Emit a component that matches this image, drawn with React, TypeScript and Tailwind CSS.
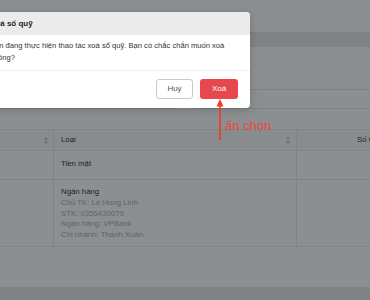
import React from "react";

function SortIcon() {
    return (
        <svg width="4" height="7" viewBox="0 0 4 7" className="shrink-0">
            <path d="M2 0 L4 2.6 L0 2.6 Z" fill="#bfbfbf" />
            <path d="M2 7 L4 4.4 L0 4.4 Z" fill="#bfbfbf" />
        </svg>
    );
}

function ConfirmModal() {
    return (
        <div className="absolute left-[-26px] top-[12px] w-[276px] rounded-[4px] bg-white shadow-[0_2px_8px_rgba(0,0,0,0.18)]">
            <div className="h-[23px] rounded-t-[4px] bg-[#ebebeb] pl-[16px] flex items-center">
                <span className="text-[8px] font-semibold text-[#1f1f1f]">Xoá sổ quỹ</span>
            </div>
            <div className="border-b border-[#efefef] pl-[16px] pr-[3px] pt-[5px] pb-[6px] text-[7.6px] leading-[12px] text-[#333]">
                Bạn đang thực hiện thao tác xoá sổ quỹ. Bạn có chắc chắn muốn xoá không?
            </div>
            <div className="flex justify-end gap-[7px] pt-[8px] pb-[9px] pr-[12px]">
                <button className="h-[20px] w-[37px] rounded-[3px] border border-[#c9c9c9] bg-white text-[8px] text-[#555]">
                    Huỷ
                </button>
                <button className="h-[20px] w-[38px] rounded-[3px] bg-[#e6484e] text-[8px] text-white">
                    Xoá
                </button>
            </div>
        </div>
    );
}

export default function App() {
    return (
        <div className="relative h-[300px] w-[370px] overflow-hidden bg-white font-['Liberation_Sans',Arial,sans-serif]">
            {/* page behind the dialog */}
            <div className="h-[32px]" />
            <div className="h-[15px] bg-[#e7e9ea]" />
            <div className="h-[42px]" />
            <div className="flex h-[20px] gap-[16px]">
                <div className="-ml-[4px] w-[181px] shrink-0 rounded-[2px] border border-[#e6e6e6]" />
                <div className="flex-1 -mr-[6px] rounded-[2px] border border-[#e6e6e6]" />
            </div>
            <div className="h-[20px]" />

            <div className="text-[7.8px] text-[#3a3a3a]">
                <div className="flex h-[22px] border-y border-[#ebebeb] bg-[#fafafa]">
                    <div className="flex w-[53px] shrink-0 items-center justify-end pr-[5px]">
                        <SortIcon />
                    </div>
                    <div className="flex w-[243px] shrink-0 items-center justify-between border-l border-[#ebebeb] pl-[7px] pr-[6px]">
                        <span className="font-medium">Loại</span>
                        <SortIcon />
                    </div>
                    <div className="flex flex-1 items-center border-l border-[#ebebeb] pl-[60px] whitespace-nowrap">
                        Số tiền
                    </div>
                </div>
                <div className="flex h-[29px] border-b border-[#ebebeb]">
                    <div className="w-[53px] shrink-0" />
                    <div className="w-[243px] shrink-0 border-l border-[#ebebeb] pl-[7px] pt-[7px] leading-[11px]">Tiền mặt</div>
                    <div className="flex-1 border-l border-[#ebebeb]" />
                </div>
                <div className="flex h-[67px] border-b border-[#ebebeb]">
                    <div className="w-[53px] shrink-0" />
                    <div className="w-[243px] shrink-0 border-l border-[#ebebeb] pl-[7px] pt-[7px] leading-[10.75px]">
                        <div>Ngân hàng</div>
                        <div className="text-[#b0b0b0]">Chủ TK: Le Hong Linh</div>
                        <div className="text-[#b0b0b0]">STK: 0355430079</div>
                        <div className="text-[#b0b0b0]">Ngân hàng: VPBank</div>
                        <div className="text-[#b0b0b0]">Chi nhánh: Thanh Xuân</div>
                    </div>
                    <div className="flex-1 border-l border-[#ebebeb]" />
                </div>
            </div>
            <div className="h-[40px]" />
            <div className="h-[13px] bg-[#e7e9ea]" />

            {/* mask */}
            <div className="absolute inset-0 bg-[rgba(0,6,10,0.45)]" />

            <ConfirmModal />

            {/* annotation */}
            <svg className="absolute left-[212px] top-[96px]" width="16" height="48" viewBox="0 0 16 48">
                <path d="M8 3 L11.5 10.5 L4.5 10.5 Z" fill="#f4361f" />
                <line x1="8" y1="10" x2="8" y2="44" stroke="#f4361f" strokeWidth="1.6" />
            </svg>
            <div className="absolute left-[225px] top-[118px] text-[13px] leading-[15px] text-[#f0453a] whitespace-nowrap">
                ấn chọn
            </div>
        </div>
    );
}
